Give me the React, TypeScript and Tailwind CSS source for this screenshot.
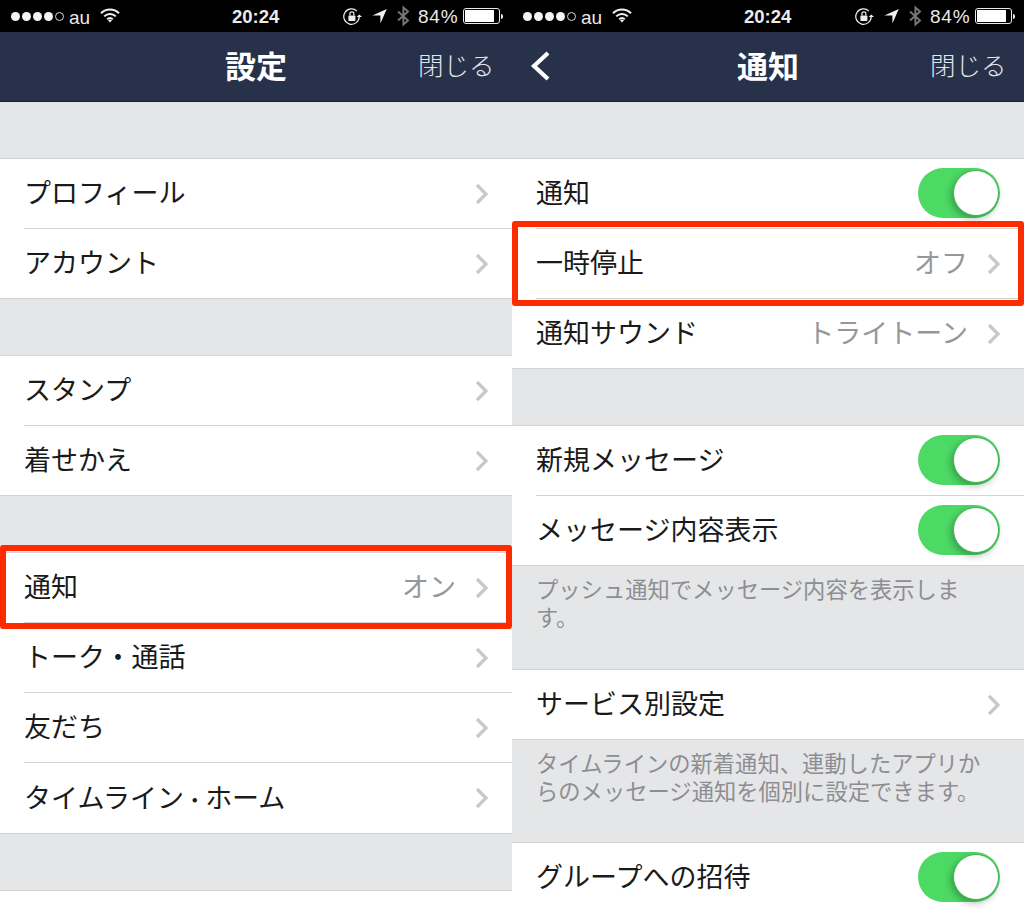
import type { ReactNode } from "react";

const font = { fontFamily: '"Noto Sans CJK JP", "Noto Sans", sans-serif' };
const latin = { fontFamily: '"Liberation Sans", sans-serif' };

function StatusBar() {
  return (
    <div className="relative flex h-8 items-center bg-black text-white">
      <div className="ml-[11px] flex items-center gap-[2px]">
        <span className="h-[9px] w-[9px] rounded-full bg-[#f4f4f4]" />
        <span className="h-[9px] w-[9px] rounded-full bg-[#f4f4f4]" />
        <span className="h-[9px] w-[9px] rounded-full bg-[#f4f4f4]" />
        <span className="h-[9px] w-[9px] rounded-full bg-[#f4f4f4]" />
        <span className="h-[9px] w-[9px] rounded-full border border-[#d8d8d8]" />
      </div>
      <span className="ml-[5px] mt-[2px] text-[19px] leading-none text-[#e8e8e8]" style={latin}>au</span>
      <svg className="ml-[10px] -mt-[1px]" width="20" height="15" viewBox="0 0 20 15" fill="none" stroke="#f2f2f2" strokeWidth="2">
        <path d="M1 5.2a13 13 0 0 1 18 0" />
        <path d="M4.2 8.4a8.4 8.4 0 0 1 11.6 0" />
        <path d="M7.2 11.2a4.2 4.2 0 0 1 5.6 0" />
        <path d="M10 14.5l-2-2.2a3 3 0 0 1 4 0z" fill="#f2f2f2" stroke="none" />
      </svg>
      <span className="absolute left-[232px] top-[7px] text-[18.5px] font-bold leading-[20px] text-[#ececec]" style={latin}>20:24</span>
      <div className="absolute left-[343px] top-[6px] flex items-center">
        <svg width="19" height="19" viewBox="0 0 19 19" fill="none">
          <path d="M16.2 9.5a7.7 7.7 0 1 1-2.3-5.4" stroke="#f0f0f0" strokeWidth="1.2" />
          <path d="M13.6 10l2.7-2.4 2.7 2.4z" fill="#f0f0f0" />
          <rect x="5.4" y="8.4" width="7" height="5.6" rx=".7" fill="#f0f0f0" />
          <path d="M6.9 8.4V6.9a2 2 0 0 1 4 0v1.5" stroke="#f0f0f0" strokeWidth="1.2" />
        </svg>
        <svg className="ml-[10px]" width="15" height="16" viewBox="0 0 15 16">
          <path d="M14.8 1L8.4 15.5V7.4H.4z" fill="#f0f0f0" />
        </svg>
        <svg className="ml-[10px]" width="13" height="20" viewBox="0 0 13 19" fill="none" stroke="#777777" strokeWidth="1.9">
          <path d="M1 5l10 9-4.6 4V1L11 5 1 14" />
        </svg>
        <span className="ml-[8px] mt-[1px] text-[19px] leading-none tracking-[0.8px] text-[#e8e8e8]" style={latin}>84%</span>
        <div className="ml-[5px] flex items-center">
          <div className="h-[16px] w-[37px] rounded-[3px] border border-[#e8e8e8] p-[1px]">
            <div className="h-full w-[29px] bg-white" />
          </div>
          <div className="ml-[1px] h-[5px] w-[2px] rounded-r-sm bg-[#e8e8e8]" />
        </div>
      </div>
    </div>
  );
}

function NavBar({ title, back }: { title: string; back?: boolean }) {
  return (
    <div className="relative flex h-[70px] items-center justify-center border-b border-[#1b2335] bg-[#27314a]">
      {back && (
        <svg className="absolute left-[18px] top-[19px]" width="20" height="30" viewBox="0 0 20 30" fill="none" stroke="#ffffff" strokeWidth="4.2">
          <path d="M18 2L4 15l14 13" />
        </svg>
      )}
      <span className="mb-[4px] text-[31px] font-bold leading-none text-white">{title}</span>
      <span className="absolute left-[418px] top-[14px] text-[25.5px] font-light leading-[36px] text-[#e3e5ea]">閉じる</span>
    </div>
  );
}

function Chevron() {
  return (
    <svg className="-mr-[1px] shrink-0" width="14" height="22" viewBox="0 0 14 22" fill="none" stroke="#c8c8cc" strokeWidth="3.2">
      <path d="M2 2l9 9-9 9" />
    </svg>
  );
}

function Toggle() {
  return (
    <div className="relative -mt-[1px] h-[50px] w-[82px] rounded-full bg-[#4cd964]">
      <div className="absolute right-[1px] top-[2px] h-[46px] w-[46px] rounded-full border border-[#41b556] bg-white shadow-[-2px_3px_7px_rgba(0,0,0,0.28)]" />
    </div>
  );
}

function Row({ label, value, toggle, first, tall }: { label: ReactNode; value?: string; toggle?: boolean; first?: boolean; tall?: boolean }) {
  return (
    <div className="bg-white pl-6">
      <div className={`flex items-center pr-[24px] ${first ? "h-[69px]" : tall ? "h-[71px] border-t border-[#d4d4d6]" : "h-[70px] border-t border-[#d4d4d6]"}`}>
        <span className="mb-[4px] flex-1 text-[27px] font-normal leading-none text-[#1a1a1a]">{label}</span>
        {value && <span className="mb-[4px] mr-[19px] text-[27px] font-normal leading-none text-[#97979b]">{value}</span>}
        {toggle ? <Toggle /> : <Chevron />}
      </div>
    </div>
  );
}

function Group({ children }: { children: ReactNode }) {
  return <div className="border-y border-[#d2d2d4]">{children}</div>;
}

function Note({ text }: { text: string }) {
  return <p className="pl-6 pr-[38px] pt-[8px] text-[22.3px] font-normal leading-[28px] text-[#8e8e92]">{text}</p>;
}

function LeftPane() {
  return (
    <div className="relative h-[909px] w-[512px] overflow-hidden bg-[#e5e6e8]">
      <StatusBar />
      <NavBar title="設定" />
      <div className="mt-[56px]">
        <Group>
          <Row first label="プロフィール" />
          <Row label="アカウント" />
        </Group>
      </div>
      <div className="mt-[56px]">
        <Group>
          <Row first label="スタンプ" />
          <Row label="着せかえ" />
        </Group>
      </div>
      <div className="mt-[56px]">
        <Group>
          <Row first label="通知" value="オン" />
          <Row label="トーク・通話" />
          <Row label="友だち" />
          <Row
            tall
            label={
              <>
                タイムライン
                <span className="text-[21px]">・</span>
                ホーム
              </>
            }
          />
        </Group>
      </div>
      <div className="mt-[56px] h-[20px] border-t border-[#d2d2d4] bg-white" />
      <div className="absolute left-0 top-[545px] h-[84px] w-[512px] rounded-[3px] border-[6px] border-[#ff2a00]" />
    </div>
  );
}

function RightPane() {
  return (
    <div className="relative h-[909px] w-[512px] overflow-hidden bg-[#e5e6e8]">
      <StatusBar />
      <NavBar title="通知" back />
      <div className="mt-[56px]">
        <Group>
          <Row first label="通知" toggle />
          <Row label="一時停止" value="オフ" />
          <Row label="通知サウンド" value="トライトーン" />
        </Group>
      </div>
      <div className="mt-[56px]">
        <Group>
          <Row first label="新規メッセージ" toggle />
          <Row label="メッセージ内容表示" toggle />
        </Group>
      </div>
      <Note text="プッシュ通知でメッセージ内容を表示します。" />
      <div className="mt-[39px]">
        <Group>
          <Row first label="サービス別設定" />
        </Group>
      </div>
      <Note text="タイムラインの新着通知、連動したアプリからのメッセージ通知を個別に設定できます。" />
      <div className="mt-[38px]">
        <Group>
          <Row first label="グループへの招待" toggle />
        </Group>
      </div>
      <div className="absolute left-0 top-[221px] h-[85px] w-[512px] rounded-[3px] border-[6px] border-[#ff2a00]" />
    </div>
  );
}

export default function App() {
  return (
    <div className="flex h-[909px] w-[1024px] overflow-hidden" style={font}>
      <LeftPane />
      <RightPane />
    </div>
  );
}
